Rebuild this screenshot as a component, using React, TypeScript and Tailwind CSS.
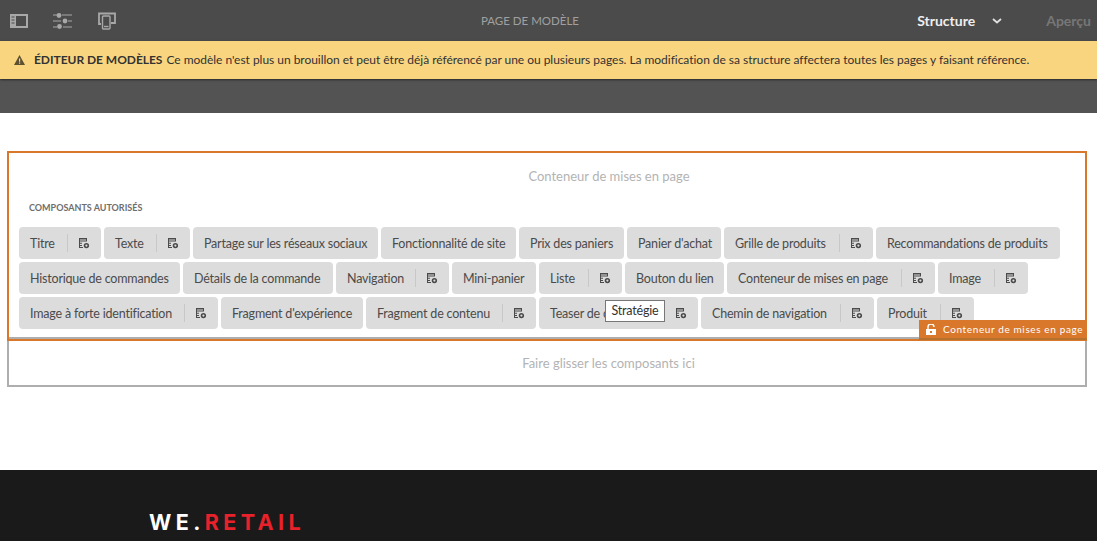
import React from 'react';

const font = 'font-["Lato","Open_Sans",sans-serif]';

const SettingsIcon = () => (
  <svg width="12" height="12" viewBox="0 0 12 12" className="text-[#4b4b4b] shrink-0">
    <path d="M1 1h8v1.4H1zM1 3.6h8v1H1zM1 5.8h3v1H1zM1 8h3v1H1zM1 10h4v1H1zM1 1h1v10H1zM8 1h1v3H8z" fill="currentColor" />
    <circle cx="8.4" cy="8.6" r="1.9" fill="none" stroke="currentColor" strokeWidth="1.6" />
  </svg>
);

type Chip = { label: string; width: string; settings?: boolean };

const rows: Chip[][] = [
  [
    { label: 'Titre', width: 'w-[82px]', settings: true },
    { label: 'Texte', width: 'w-[86px]', settings: true },
    { label: 'Partage sur les réseaux sociaux', width: 'w-[185px]' },
    { label: 'Fonctionnalité de site', width: 'w-[135px]' },
    { label: 'Prix des paniers', width: 'w-[105px]' },
    { label: "Panier d'achat", width: 'w-[94px]' },
    { label: 'Grille de produits', width: 'w-[149px]', settings: true },
    { label: 'Recommandations de produits', width: 'w-[184px]' },
  ],
  [
    { label: 'Historique de commandes', width: 'w-[161px]' },
    { label: 'Détails de la commande', width: 'w-[150px]' },
    { label: 'Navigation', width: 'w-[113px]', settings: true },
    { label: 'Mini-panier', width: 'w-[84px]' },
    { label: 'Liste', width: 'w-[83px]', settings: true },
    { label: 'Bouton du lien', width: 'w-[99px]' },
    { label: 'Conteneur de mises en page', width: 'w-[208px]', settings: true },
    { label: 'Image', width: 'w-[90px]', settings: true },
  ],
  [
    { label: 'Image à forte identification', width: 'w-[199px]', settings: true },
    { label: "Fragment d'expérience", width: 'w-[142px]' },
    { label: 'Fragment de contenu', width: 'w-[170px]', settings: true },
    { label: 'Teaser de contenu', width: 'w-[159px]', settings: true },
    { label: 'Chemin de navigation', width: 'w-[173px]', settings: true },
    { label: 'Produit', width: 'w-[97px]', settings: true },
  ],
];

const ChipItem = ({ chip }: { chip: Chip }) => (
  <div className={`${chip.width} h-8 shrink-0 rounded-[4px] bg-[#dcdcdc] pl-[11px] flex items-center text-[12.5px] tracking-[-0.2px] text-[#4b4b4b] whitespace-nowrap`}>
    <span className="flex-1 pt-[3px]">{chip.label}</span>
    {chip.settings && (
      <>
        <span className="w-px h-[18px] bg-[#c8c8c8]" />
        <span className="w-[33px] flex justify-center -mt-px pr-px">
          <SettingsIcon />
        </span>
      </>
    )}
  </div>
);

export default function App() {
  return (
    <div className={`${font} h-[541px] w-[1097px] overflow-hidden bg-white flex flex-col`}>
      <header className="h-[41px] bg-[#4b4b4b] flex items-center text-[#a8a8a8] shrink-0">
        <div className="flex items-center w-[440px] pl-[10px]">
          <svg width="18" height="14" viewBox="0 0 18 14" fill="none">
            <path d="M0 0h18v14H0zM6 2v10h10V2z" fill="currentColor" fillRule="evenodd" />
            <path d="M1.5 3h3M1.5 6h3M1.5 9h3" stroke="#4b4b4b" strokeWidth="1" />
          </svg>
          <svg width="19" height="16" viewBox="0 0 19 16" className="ml-[25px]" fill="currentColor">
            <path d="M0 2h4M9 2h10M0 8h8M15 8h4M0 14h4M10 14h9" stroke="currentColor" strokeWidth="1" />
            <circle cx="6" cy="2.5" r="2.4" />
            <circle cx="12" cy="8" r="2.4" />
            <circle cx="6.5" cy="13.5" r="2.4" />
          </svg>
          <svg width="18" height="18" viewBox="0 0 18 18" className="ml-[26px]" fill="none" stroke="currentColor">
            <path d="M3 12H1V1.5h16V11h-2M15 11l-2 0" strokeWidth="1.8" />
            <rect x="4.5" y="4" width="7.5" height="13" rx="1" strokeWidth="1.4" fill="#4b4b4b" />
            <path d="M6 14.5h4.5" strokeWidth="1.4" />
          </svg>
        </div>
        <div className="w-[180px] text-center text-[11.5px] text-[#a0a0a0]">PAGE DE MODÈLE</div>
        <div className="flex-1 flex items-center justify-end pr-[6px]">
          <span className="text-[14px] font-bold text-[#eeeeee]">Structure</span>
          <svg width="10" height="6" viewBox="0 0 10 6" className="ml-[17px]" fill="none" stroke="#e0e0e0" strokeWidth="1.8">
            <path d="M1 1l4 3.5L9 1" />
          </svg>
          <span className="ml-[44px] text-[14px] font-bold text-[#777777]">Aperçu</span>
        </div>
      </header>

      <div className="h-[38px] shrink-0 bg-[#fad580] flex items-center pl-[14px] text-xs tracking-[-0.03px] text-[#323232] shadow-[0_1px_2px_rgba(0,0,0,0.5)] relative whitespace-nowrap">
        <svg width="11" height="10" viewBox="0 0 11 10" className="mr-[9px]">
          <path fillRule="evenodd" d="M5.5 0L11 10H0zM5 3.5h1.2v3.3H5zM5 7.6h1.2v1.2H5z" fill="#5c5130" />
        </svg>
        <span className="font-bold mr-1">ÉDITEUR DE MODÈLES</span>
        <span>Ce modèle n'est plus un brouillon et peut être déjà référencé par une ou plusieurs pages. La modification de sa structure affectera toutes les pages y faisant référence.</span>
      </div>

      <div className="h-[34px] shrink-0 bg-[#535353]" />

      <main className="flex-1 pl-[7px] pr-[10px] pt-[38px]">
        <section className="relative h-[190px] border-2 border-[#d9782a] pl-[10px] pt-[14px]">
          <p className="text-center text-[13px] text-[#b3b3b3] pl-[114px]">Conteneur de mises en page</p>
          <p className="mt-[14px] ml-[10px] text-[9px] font-bold text-[#6e6e6e]">COMPOSANTS AUTORISÉS</p>
          <div className="mt-[13px] flex flex-col gap-[3px]">
            {rows.map((row, i) => (
              <div key={i} className="flex gap-[3px]">
                {row.map(chip => (
                  <ChipItem key={chip.label} chip={chip} />
                ))}
              </div>
            ))}
          </div>
          <div className="absolute left-[596px] top-[147px] w-[60px] h-[22px] bg-white border border-[#777777] flex items-center justify-center text-[12.5px] tracking-[-0.2px] text-[#333333]">
            Stratégie
          </div>
          <div className="absolute right-[-2px] bottom-[-1px] w-[168px] h-[20px] bg-[#d9782a] border-b-2 border-[#b5722f] flex items-center pl-[7px] gap-[7px] text-[10px] tracking-[0.62px] text-white whitespace-nowrap">
            <svg width="10" height="11" viewBox="0 0 10 11" fill="white">
              <path fillRule="evenodd" d="M0 5h10v6H0zM4 7v2h2V7z" />
              <path d="M2 5V3a3 3 0 0 1 6 0" fill="none" stroke="white" strokeWidth="1.4" />
            </svg>
            Conteneur de mises en page
          </div>
        </section>
        <section className="h-[50px] -mt-[4px] border-2 border-[#aeaeae] flex items-center justify-center pt-[4px] pl-[123px] text-[13px] text-[#b3b3b3]">
          Faire glisser les composants ici
        </section>
      </main>

      <footer className="h-[71px] shrink-0 bg-[#1a1a1a] pl-[149px] pt-[40px]">
        <div className={`font-["Inter",sans-serif] text-[21.5px] leading-6 font-bold tracking-[4.4px] text-white`}>
          WE.<span className="text-[#e8212b]">RETAIL</span>
        </div>
      </footer>
    </div>
  );
}
